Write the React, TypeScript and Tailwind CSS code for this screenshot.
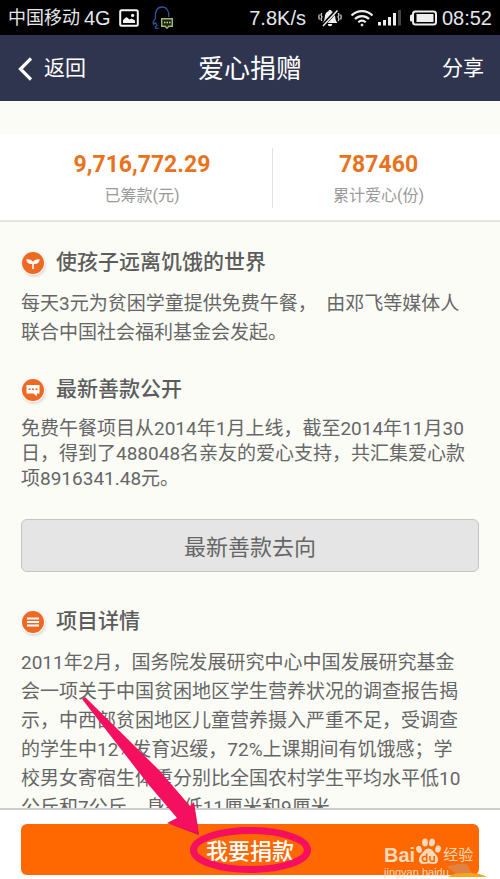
import React from 'react';

const details = [
  '2011年2月，国务院发展研究中心中国发展研究基金',
  '会一项关于中国贫困地区学生营养状况的调查报告揭',
  '示，中西部贫困地区儿童营养摄入严重不足，受调查',
  '的学生中12%发育迟缓，72%上课期间有饥饿感；学',
  '校男女寄宿生体重分别比全国农村学生平均水平低10',
  '公斤和7公斤，身高低11厘米和9厘米。',
];

const StatusBar = () => (
  <div className="flex h-[35px] shrink-0 items-center justify-between bg-black px-2 pt-px text-gray-200">
    <div className="flex items-center">
      <span className="text-[18px] leading-6">中国移动</span>
      <span className="ml-1 font-['Liberation_Sans'] text-[20px] leading-6">4G</span>
      <svg className="ml-2 h-[18px] w-5" viewBox="0 0 20 18" fill="none">
        <rect x="1.2" y="1.2" width="17.6" height="15.6" rx="1.5" stroke="#f4f4f4" strokeWidth="2" />
        <path d="M4 14V11l3.5-3 3 2.5 2-1 3.5 2V14Z" fill="#f4f4f4" />
        <circle cx="13.6" cy="6.4" r="1.6" fill="#f4f4f4" />
      </svg>
      <svg className="ml-3 h-6 w-6" viewBox="0 0 24 24" fill="none">
        <path
          d="M8 22c-2 .8-4 .4-3.6-.9L6 19.5l-1.5-2.7-2 1.4c-.7-1.6 0-3.7 2-5.7C3.6 5 6.5 1 11 1s7.5 4 6.7 10"
          stroke="#2b549c"
          strokeWidth="1.3"
        />
        <path d="M10.7 12.7h10.6v7.6h-3.5l-1.8 2-1.8-2h-3.5Z" fill="#1c2412" stroke="#a3b771" strokeWidth="1.4" />
        <path d="M13 16.5h1.5m1 0H17m1 0h1.5" stroke="#c5d596" strokeWidth="1.6" />
      </svg>
    </div>
    <div className="flex items-center">
      <span className="font-['Liberation_Sans'] text-[20px] leading-6">7.8K/s</span>
      <svg className="ml-3 h-[18px] w-6" viewBox="0 0 24 18">
        <path
          d="M12 1c.9 0 1.4.5 1.5 1.3 2.6.8 3.6 3 3.8 6.2.1 2.3.8 3.8 2.2 5.5h-15c1.4-1.7 2.1-3.2 2.2-5.5.2-3.2 1.2-5.4 3.8-6.2C10.6 1.5 11.1 1 12 1Z"
          fill="#eee"
        />
        <path d="M9.8 15h4.4a2.2 2.2 0 0 1-4.4 0Z" fill="#eee" />
        <path d="M20 0 4 17.5" stroke="#000" strokeWidth="3.5" />
        <path d="M19.5 1.5 5 17" stroke="#eee" strokeWidth="1.5" />
        <path
          d="M3.8 4 3 6l1 2-1 2 .8 2M1.2 5.5.8 8l.6 2.5M20.2 4l.8 2-1 2 1 2-.8 2M22.8 5.5l.4 2.5-.6 2.5"
          stroke="#ccc"
          strokeWidth="1.3"
          fill="none"
        />
      </svg>
      <svg className="ml-2 h-[18px] w-6" viewBox="0 0 24 18" fill="none" stroke="#eee" strokeWidth="2.2">
        <path d="M1.5 6.5c5.8-5.8 15.2-5.8 21 0M5 10c4-3.9 10-3.9 14 0M8.300 13.3c2.2-2 5.2-2 7.4 0" />
        <circle cx="12" cy="16" r="1" fill="#eee" strokeWidth="1" />
      </svg>
      <svg className="ml-1 h-[18px] w-6" viewBox="0 0 24 18" fill="#eee">
        <rect x="0" y="13" width="3" height="3.5" />
        <rect x="5" y="11" width="3" height="5.5" />
        <rect x="10" y="8" width="3" height="8.5" />
        <rect x="15" y="4" width="3" height="12.5" />
        <rect x="20" y="1" width="3" height="15.5" fill="#444" />
      </svg>
      <svg className="ml-2 h-4 w-7" viewBox="0 0 28 16">
        <path d="M3 4.5H1.5A1.5 1.5 0 0 0 0 6v4a1.5 1.5 0 0 0 1.5 1.5H3" fill="#eee" />
        <rect x="3" y="1.5" width="23" height="13" rx="2.5" fill="none" stroke="#eee" strokeWidth="2" />
        <rect x="6.5" y="4" width="17" height="8" fill="#eee" />
      </svg>
      <span className="ml-1 font-['Liberation_Sans'] text-[20px] leading-6">08:52</span>
    </div>
  </div>
);

const Stat = ({ value, label }: { value: string; label: string }) => (
  <div className="flex flex-col items-center">
    <span className="text-[23px] font-bold leading-[30px] text-[#e8731c]">{value}</span>
    <span className="mt-1 text-[16px] leading-6 text-[#999]">{label}</span>
  </div>
);

const SectionTitle = ({ icon, children }: { icon: React.ReactNode; children: React.ReactNode }) => (
  <h2 className="mb-3 flex items-center gap-[11px] text-[21px] font-medium leading-[29px] text-[#5c5c5c]">
    <svg className="size-6 rounded-full shadow-[1px_2px_2px_#e6ddd4]" viewBox="0 0 24 24">
      <circle cx="12" cy="12" r="12" fill="#fff6ee" />
      <circle cx="12" cy="12" r="11" fill="#ee6a24" />
      {icon}
    </svg>
    {children}
  </h2>
);

const App = () => {
  return (
    <div className="flex h-screen flex-col overflow-hidden bg-[#fbfcf6] font-['Roboto','Noto_Sans_CJK_SC',sans-serif]">
      <StatusBar />

      <header className="grid h-[66px] shrink-0 grid-cols-3 items-center bg-[#30354f] px-4 pt-[2px] text-[21px] text-white">
        <button className="flex items-center gap-3">
          <svg className="h-6 w-4" viewBox="0 0 16 24" fill="none" stroke="#fff" strokeWidth="3.2">
            <path d="M15 1.5 4.5 12 15 22.5" />
          </svg>
          返回
        </button>
        <h1 className="text-center text-[26px] leading-8">爱心捐赠</h1>
        <button className="justify-self-end">分享</button>
      </header>

      <main className="min-h-0 flex-1 overflow-hidden">
        <div className="mt-[33px] grid grid-cols-[273fr_227fr] border-b-2 border-[#e3e3e6] bg-white pb-3 pt-[14px]">
          <div className="border-r border-[#e2e2e2] pl-3 pt-[2px]">
            <Stat value="9,716,772.29" label="已筹款(元)" />
          </div>
          <div className="pr-4 pt-[2px]">
            <Stat value="787460" label="累计爱心(份)" />
          </div>
        </div>

        <div className="px-[21px] pt-[26px] text-[19px] leading-[29px] text-[#666]">
          <section>
            <SectionTitle
              icon={
                <path
                  d="M11.2 18v-5C8 13.3 5.8 11.8 5.2 8.2c3.3-.3 5.6.6 6.8 2.8 1.2-2.2 3.5-3.1 6.8-2.8-.6 3.6-2.8 5.1-6 4.8v5Z"
                  fill="#fff"
                />
              }
            >
              使孩子远离饥饿的世界
            </SectionTitle>
            <p>
              <span className="block whitespace-nowrap">每天3元为贫困学童提供免费午餐，　由邓飞等媒体人</span>
              <span className="block whitespace-nowrap">联合中国社会福利基金会发起。</span>
            </p>
          </section>

          <section className="mt-7">
            <SectionTitle
              icon={
                <>
                  <path d="M5.5 7h13v8.5h-2.5l-.5 3-2.7-3H5.5Z" fill="#fff" />
                  <path d="M7.5 11.2h2m1.5 0h2m1.5 0h2" stroke="#ee6a24" strokeWidth="1.5" />
                </>
              }
            >
              最新善款公开
            </SectionTitle>
            <p className="leading-[25px]">
              <span className="block whitespace-nowrap">免费午餐项目从2014年1月上线，截至2014年11月30</span>
              <span className="block whitespace-nowrap">日，得到了488048名亲友的爱心支持，共汇集爱心款</span>
              <span className="block whitespace-nowrap">项8916341.48元。</span>
            </p>
            <button className="mt-7 h-[53px] w-full rounded-md border border-[#c4c4c4] bg-[#e5e5e5] pt-1 text-[22px] text-[#666]">
              最新善款去向
            </button>
          </section>

          <section className="mt-[35px]">
            <SectionTitle icon={<path d="M6 8.5h12M6 12h12M6 15.5h12" stroke="#fff" strokeWidth="1.8" />}>
              项目详情
            </SectionTitle>
            <p>
              {details.map((line) => (
                <span key={line} className="block whitespace-nowrap">{line}</span>
              ))}
            </p>
          </section>
        </div>
      </main>

      <footer className="relative shrink-0 border-t-2 border-[#cfcfcf] bg-white px-[21px] pb-1 pt-[14px]">
        <button className="h-[51px] w-full rounded-md bg-[#ff6700] pt-1 text-[22px] font-medium text-white">我要捐款</button>

        {/* watermark */}
        <div className="absolute bottom-0 right-3 w-[104px] text-[#ffd9b8]">
          <div className="flex items-end">
            <span className="font-['Liberation_Sans'] text-[20px] font-bold leading-5">Bai</span>
            <svg className="h-[27px] w-[27px]" viewBox="0 0 27 27" fill="#ffd9b8">
              <ellipse cx="4" cy="11.5" rx="2.8" ry="3.7" transform="rotate(-15 4 11.5)" />
              <ellipse cx="10" cy="4.5" rx="2.9" ry="3.9" />
              <ellipse cx="17" cy="4.5" rx="2.9" ry="3.9" transform="rotate(12 17 4.5)" />
              <ellipse cx="23" cy="11" rx="2.8" ry="3.7" transform="rotate(15 23 11)" />
              <path d="M13.5 10.5c3.5 0 4.5 3 7 5.5 3.5 3.5 4 10-2 10-2 0-3.5-.5-5-.5s-3 .5-5 .5c-6 0-5.5-6.5-2-10 2.5-2.5 3.5-5.5 7-5.5Z" />
              <path
                d="M11.7 15.5v7.7H9.3c-2.6 0-2.6-4.7 0-4.7h2.2M15 18v3.5c0 1.2.6 1.7 1.7 1.7h2.5V18"
                fill="none"
                stroke="#ff6700"
                strokeWidth="1.5"
              />
            </svg>
            <span className="ml-px text-[15px] leading-5">经验</span>
          </div>
          <div className="font-['Liberation_Sans'] text-[11px] leading-[14px]">jingyan.baidu</div>
          <svg className="absolute bottom-0 right-0 h-4 w-11" viewBox="0 0 44 16">
            <path d="M3 4c4-3 7-1 11-3 4-1 9-1 10 2l4 8H12Z" fill="#d88a55" opacity=".8" />
            <path d="M8 11.5c10-2 24-2 29 0l6 2.500H4Z" fill="#f7a51c" />
          </svg>
        </div>

        {/* pointer and ring around the donate label */}
        <svg
          className="pointer-events-none absolute bottom-0 left-1/2 h-[189px] w-[350px] -translate-x-1/2"
          viewBox="75 690 350 189"
        >
          <ellipse cx="250.5" cy="850" rx="57" ry="19.5" fill="none" stroke="#f5105f" strokeWidth="7" />
          <path d="M82 699 85 697 159 770 190 806 194 802 199 835 167 823 177 818 148 784Z" fill="#f5105f" />
          <path d="M199 835 167 823l31 10-4-30Z" fill="#b80d4c" opacity=".5" />
        </svg>
      </footer>
    </div>
  );
};

export default App;
